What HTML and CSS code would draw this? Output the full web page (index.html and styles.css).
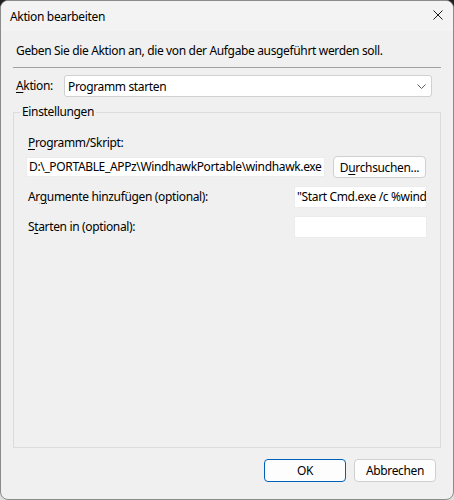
FILE: index.html
```html
<!DOCTYPE html>
<html lang="de">
<head>
    <meta charset="UTF-8">
    <title>Aktion bearbeiten</title>
    <link rel="stylesheet" href="styles.css">
</head>
<body>
<div class="window">
    <div class="titlebar">
        <span>Aktion bearbeiten</span>
        <svg class="close" width="10" height="10" viewBox="0 0 10 10">
            <path d="M0.5 0.5L9.5 9.5M9.5 0.5L0.5 9.5" stroke="#1a1a1a" stroke-width="1"/>
        </svg>
    </div>
    <div class="content">
        <p class="intro">Geben Sie die Aktion an, die von der Aufgabe ausgeführt werden soll.</p>
        <div class="sep"></div>
        <div class="action-row">
            <label class="action-label"><u>A</u>ktion:</label>
            <div class="combo">
                <span>Programm starten</span>
                <svg width="9" height="5" viewBox="0 0 9 5">
                    <path d="M0.5 0.5L4.5 4.5L8.5 0.5" fill="none" stroke="#5c5c5c" stroke-width="1"/>
                </svg>
            </div>
        </div>
        <fieldset class="group">
            <legend>Einstellungen</legend>
            <div class="field-label"><u>P</u>rogramm/Skript:</div>
            <div class="row">
                <div class="input wide">D:\_PORTABLE_APPz\WindhawkPortable\windhawk.exe</div>
                <button class="btn browse">D<u>u</u>rchsuchen...</button>
            </div>
            <div class="row">
                <label class="row-label">Ar<u>g</u>umente hinzufügen (optional):</label>
                <div class="input small">"Start Cmd.exe /c %windir%\system32\cmd.exe"</div>
            </div>
            <div class="row">
                <label class="row-label">S<u>t</u>arten in (optional):</label>
                <div class="input small"></div>
            </div>
        </fieldset>
        <div class="buttons">
            <button class="btn primary">OK</button>
            <button class="btn">Abbrechen</button>
        </div>
    </div>
</div>
</body>
</html>
```

FILE: styles.css
```css
html, body {
    margin: 0;
    height: 100%;
}
body {
    background: linear-gradient(#202020 0%, #5a5a5a 60%, #e0e0e0 100%);
    font-family: "Noto Sans", "Liberation Sans", sans-serif;
    font-size: 12px;
    letter-spacing: -0.35px;
    color: #000;
}
u {
    text-decoration-thickness: 1px;
    text-underline-offset: 2px;
}
.window {
    width: 454px;
    height: 500px;
    box-sizing: border-box;
    border: 1px solid #8c8c8c;
    border-radius: 8px;
    overflow: hidden;
    display: flex;
    flex-direction: column;
    background: #f0f0f0;
}
.titlebar {
    height: 30px;
    flex: none;
    display: flex;
    align-items: center;
    justify-content: space-between;
    padding: 0 10px 0 9px;
    background: #f3f3f3;
}
.close {
    margin-top: -2px;
}
.content {
    flex: 1;
    display: flex;
    flex-direction: column;
    padding: 0 12px;
}
.intro {
    margin: 12px 0 0;
    padding-left: 3px;
    line-height: 16px;
}
.sep {
    margin-top: 8px;
    height: 1px;
    background: #a0a0a0;
}
.action-row {
    margin-top: 7px;
    display: flex;
    align-items: center;
}
.action-label {
    width: 48px;
    padding-left: 3px;
    line-height: 16px;
}
.combo {
    width: 368px;
    height: 22px;
    box-sizing: border-box;
    border: 1px solid #d0d0d0;
    border-radius: 3px;
    background: #fff;
    display: flex;
    align-items: center;
    justify-content: space-between;
    padding: 0 5px 0 3px;
}
.group {
    flex: 1;
    margin: 7px 0 0;
    border: 1px solid #dcdcdc;
    padding: 15px 13px 0 12px;
    min-width: 0;
}
.group legend {
    margin-left: -6px;
    padding: 0 2px;
    line-height: 16px;
}
.field-label {
    padding-left: 2px;
    line-height: 16px;
}
.row {
    display: flex;
    align-items: center;
    height: 22px;
    margin-top: 8px;
}
.field-label + .row {
    margin-top: 5px;
}
.row-label {
    padding-left: 2px;
    line-height: 16px;
}
.input {
    height: 20px;
    box-sizing: border-box;
    background: #fff;
    border: 1px solid #ececec;
    padding: 0 2px;
    line-height: 18px;
    white-space: nowrap;
    overflow: hidden;
}
.input.wide {
    width: 299px;
}
.input.small {
    width: 133px;
    height: 22px;
    line-height: 20px;
    margin-left: auto;
}
.btn {
    font: inherit;
    letter-spacing: inherit;
    color: #000;
    height: 22px;
    box-sizing: border-box;
    background: #fdfdfd;
    border: 1px solid #d0d0d0;
    border-radius: 4px;
    padding: 0;
    cursor: pointer;
}
.browse {
    width: 93px;
    margin-left: 8px;
}
.buttons {
    display: flex;
    justify-content: flex-end;
    gap: 8px;
    margin: 11px 5px 17px 0;
}
.buttons .btn {
    width: 82px;
    height: 23px;
}
.primary {
    border-color: #005fb8;
}
```
